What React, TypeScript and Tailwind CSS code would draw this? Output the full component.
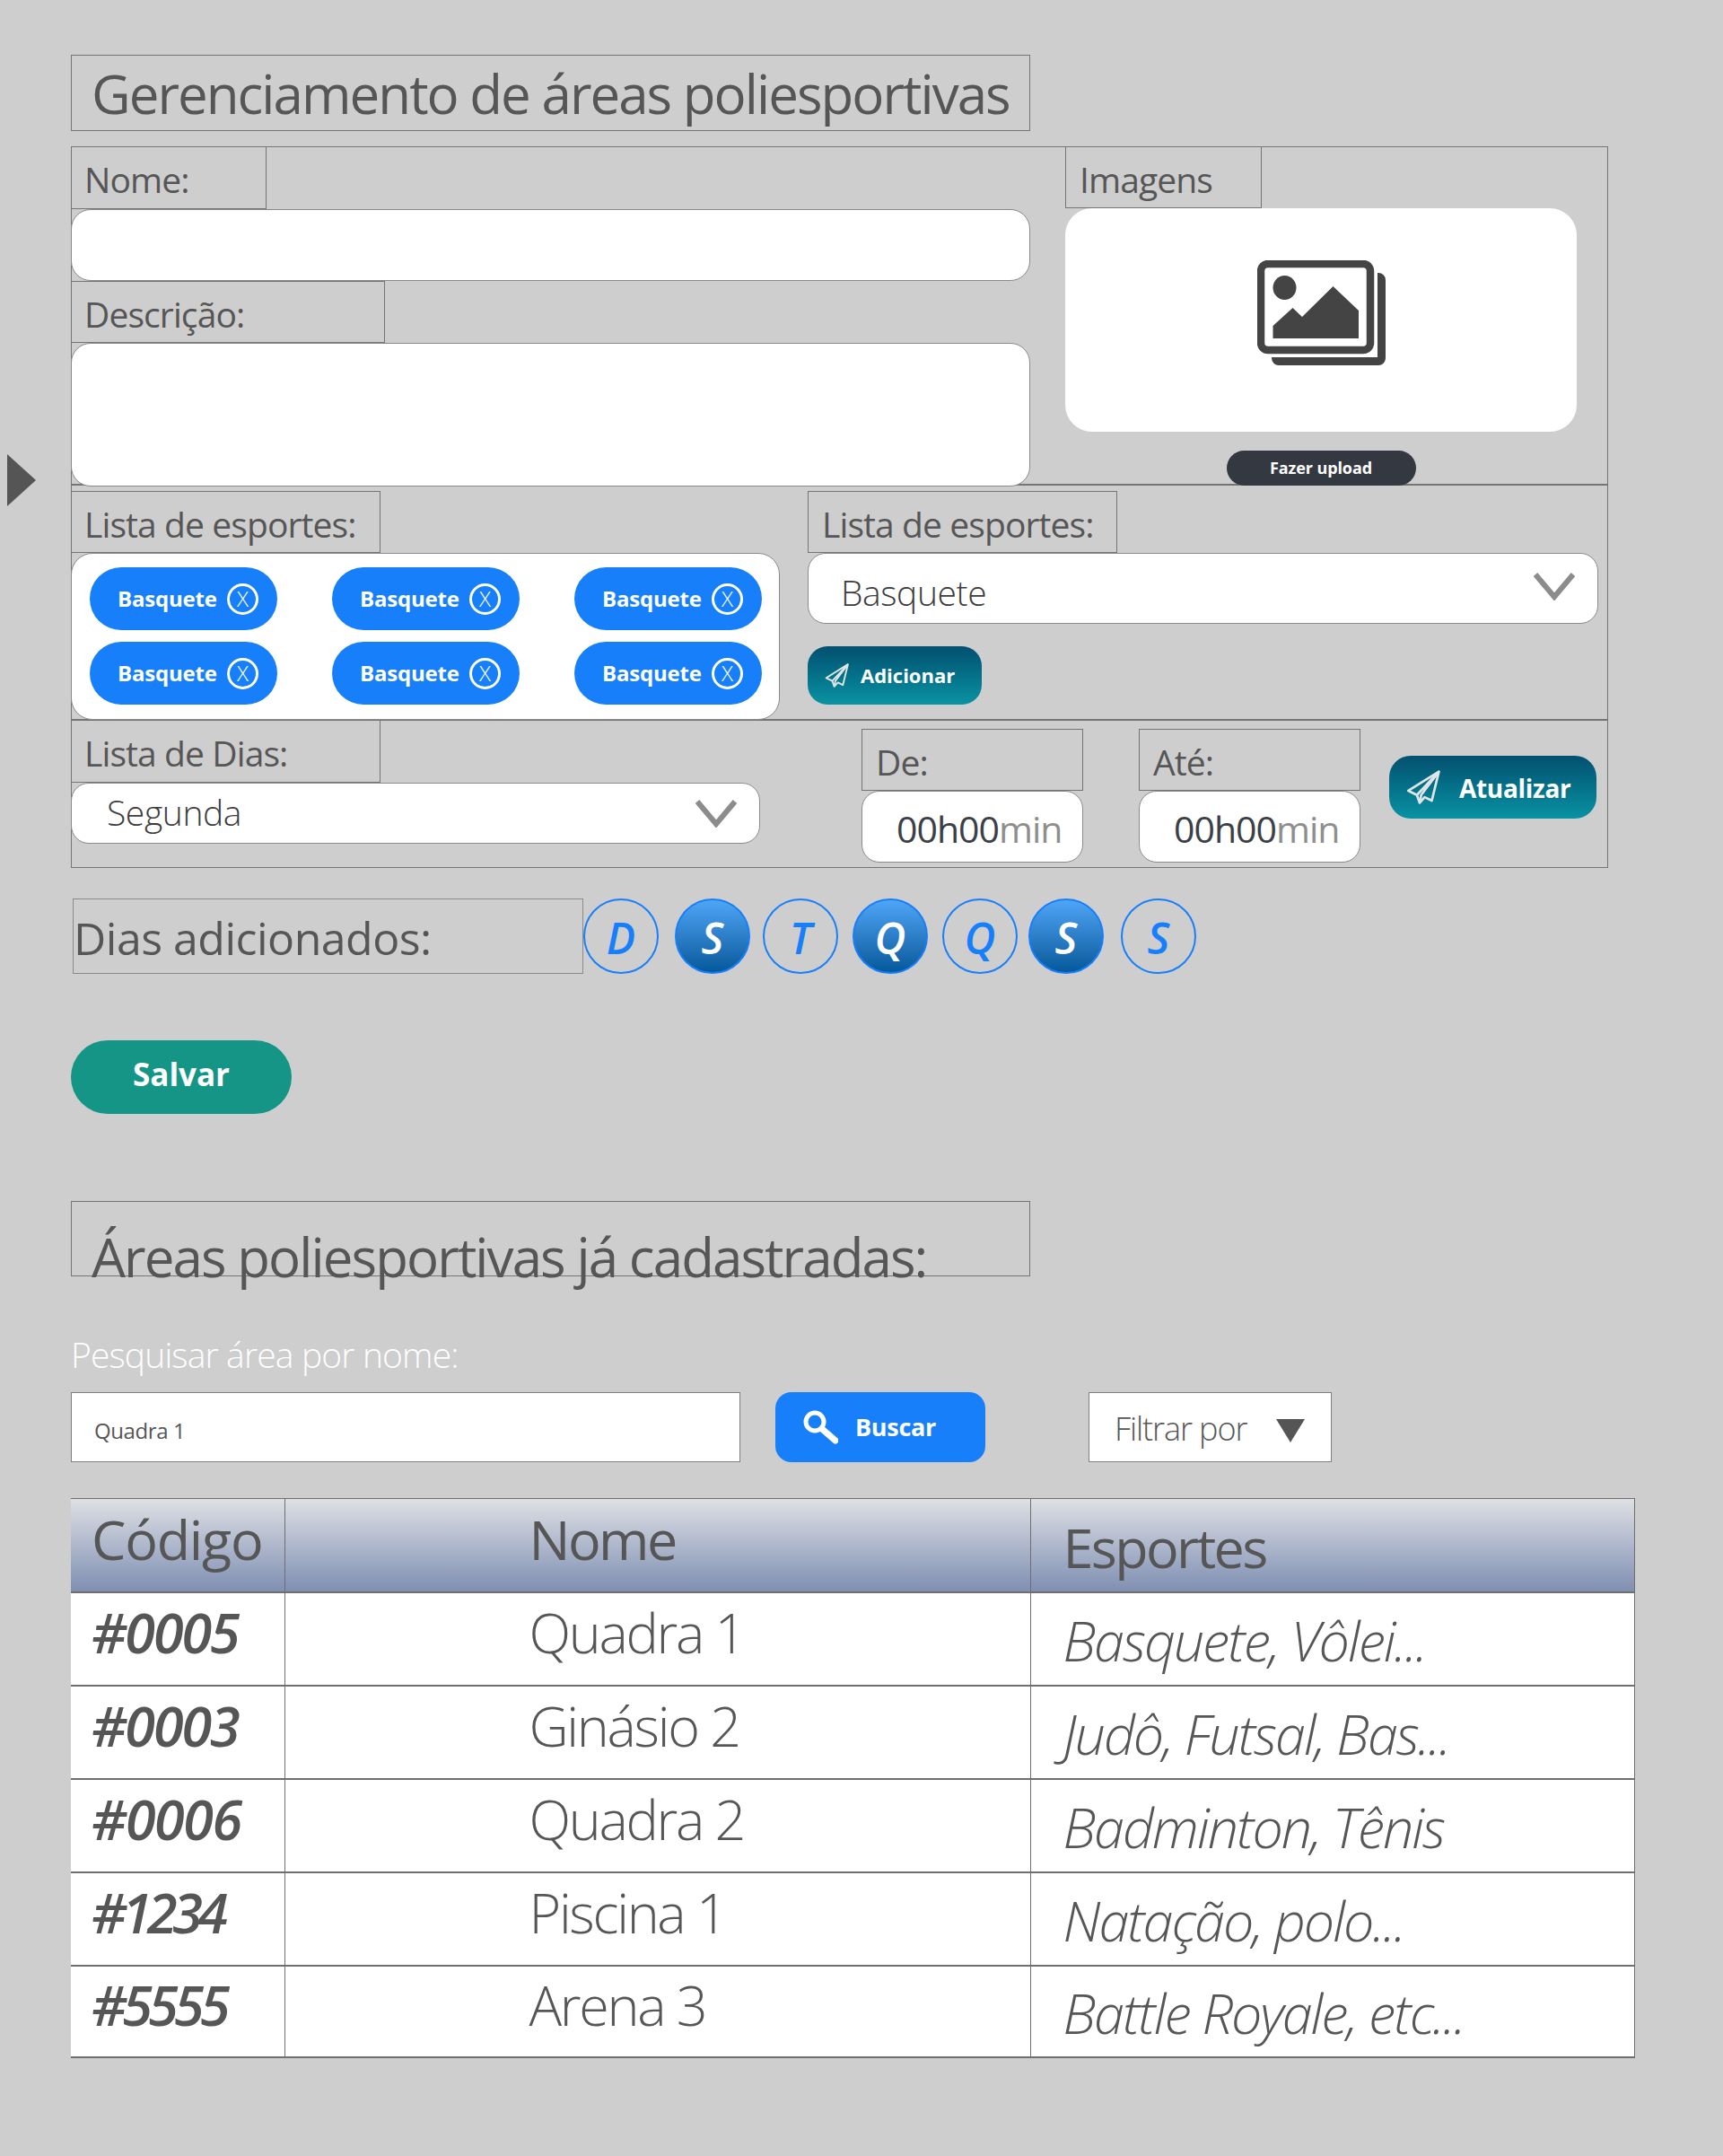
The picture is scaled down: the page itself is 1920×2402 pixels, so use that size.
const sans = "font-['Open_Sans','Noto_Sans',sans-serif]";

function Plane({ className }: { className: string }) {
  return (
    <svg viewBox="0 0 24 24" fill="none" stroke="#dfe6e8" strokeWidth="1.7" strokeLinejoin="round" className={className}>
      <path d="M23 1 1.5 14.5l6 3L9.5 23l3.5-4 5 2.5z" />
      <path d="M23 1 7.5 17.5M9.5 23l1-5.5L23 1" />
    </svg>
  );
}

function Chevron({ className }: { className: string }) {
  return (
    <svg viewBox="0 0 48 32" fill="none" stroke="#8c8c8c" strokeWidth="6" className={className}>
      <path d="M3 3 24 28 45 3" />
    </svg>
  );
}

function Label({ text, className }: { text: string; className: string }) {
  return (
    <div className={`box-border border border-[#757575] text-[#565656] text-[39px] font-medium leading-[71px] pl-[15px] tracking-[-0.9px] ${className}`}>
      {text}
    </div>
  );
}

function Chip() {
  return (
    <div className="flex items-center w-[209px] h-[70px] rounded-[35px] bg-[#187ffb] pl-[31px] text-white">
      <span className="text-[24px] font-bold tracking-[-0.2px] w-[122px]">Basquete</span>
      <span className="flex items-center justify-center w-[35px] h-[35px] rounded-full border-[3px] border-white text-[24px] font-light">X</span>
    </div>
  );
}

function Day({ letter, active, className }: { letter: string; active: boolean; className: string }) {
  return (
    <div
      className={
        active
          ? `flex items-center justify-center w-[84px] h-[84px] pt-[3px] rounded-full border-2 border-[#187ffb] bg-gradient-to-b from-[#4ea6f7] to-[#02599b] text-white text-[48px] font-semibold italic ${className}`
          : `flex items-center justify-center w-[84px] h-[84px] pt-[3px] rounded-full border-2 border-[#187ffb] text-[#187ffb] text-[48px] font-semibold italic ${className}`
      }
    >
      {letter}
    </div>
  );
}

function Time() {
  return (
    <div className="box-border w-[247px] h-[80px] rounded-[20px] border border-[#8a8a8a] bg-white pl-[38px] text-[41px] leading-[82px] font-medium tracking-[-1px] text-[#3b3f48]">
      00h00<span className="text-[#8e8e8e]">min</span>
    </div>
  );
}

const rows = [
  { code: "#0005", codeTrack: "tracking-[-2px]", name: "Quadra 1", sports: "Basquete, Vôlei...", height: "h-[104px]" },
  { code: "#0003", codeTrack: "tracking-[-2px]", name: "Ginásio 2", sports: "Judô, Futsal, Bas...", height: "h-[104px]" },
  { code: "#0006", codeTrack: "tracking-[-1.4px]", name: "Quadra 2", sports: "Badminton, Tênis", height: "h-[104px]" },
  { code: "#1234", codeTrack: "tracking-[-5.4px]", name: "Piscina 1", sports: "Natação, polo...", height: "h-[104px]" },
  { code: "#5555", codeTrack: "tracking-[-4.8px]", name: "Arena 3", sports: "Battle Royale, etc...", height: "h-[102px]" },
];

export default function App() {
  return (
    <div className={`relative box-border h-[2402px] w-[1920px] bg-[#cecece] pl-[79px] pt-[61px] ${sans}`}>
      <div className="absolute left-[8px] top-[506px] h-0 w-0 border-y-[29px] border-l-[32px] border-y-transparent border-l-[#555555]" />

      <h1 className="box-border w-[1069px] h-[85px] border border-[#757575] pl-[22px] text-[60px] font-medium leading-[84px] whitespace-nowrap text-[#565656] tracking-[-1.95px]">
        Gerenciamento de áreas poliesportivas
      </h1>

      <div className="box-border mt-[17px] w-[1713px] border border-[#757575]">
        <div className="flex h-[377px] border-b-2 border-[#757575]">
          <div className="-ml-px w-[1069px]">
            <Label text="Nome:" className="w-[218px] h-[69px] border-t-0 border-l-0" />
            <div className="h-[80px] rounded-[22px] border border-[#8a8a8a] bg-white" />
            <Label text="Descrição:" className="w-[350px] h-[69px] border-l-0" />
            <div className="h-[160px] rounded-[22px] border border-[#8a8a8a] bg-white" />
          </div>
          <div className="ml-[39px] w-[570px]">
            <Label text="Imagens" className="w-[219px] h-[68px] border-t-0" />
            <div className="flex h-[249px] items-center justify-center rounded-[30px] bg-white">
              <svg viewBox="0 0 143 117" className="h-[117px] w-[143px] -mt-[16px]" fill="#444444">
                <rect x="4" y="4" width="122" height="96" rx="8" fill="none" stroke="#444444" strokeWidth="8.5" />
                <path d="M134 14h1a8 8 0 0 1 8 8v87a8 8 0 0 1-8 8H24a8 8 0 0 1-8-8v-1h118z" />
                <ellipse cx="30.5" cy="30.5" rx="13" ry="13.5" />
                <path d="M17.5 87V73L39.5 53l10.5 10L84.5 29 113 56v31z" />
              </svg>
            </div>
            <div className="mx-auto mt-[21px] flex h-[39px] w-[211px] items-center justify-center rounded-[20px] bg-[#343841] text-[18px] font-bold tracking-[-0.1px] text-white">
              Fazer upload
            </div>
          </div>
        </div>

        <div className="flex h-[262px] border-b-2 border-[#757575] pt-[6px]">
          <div className="-ml-px w-[790px]">
            <Label text="Lista de esportes:" className="w-[345px] h-[69px] border-l-0" />
            <div className="grid h-[186px] grid-cols-[209px_209px_209px] content-start gap-x-[61px] gap-y-[13px] rounded-[24px] border border-[#8a8a8a] bg-white pl-[20px] pt-[15px]">
              {Array.from({ length: 6 }, (_, i) => (
                <Chip key={i} />
              ))}
            </div>
          </div>
          <div className="ml-[31px] w-[881px]">
            <Label text="Lista de esportes:" className="w-[345px] h-[69px]" />
            <div className="flex h-[79px] items-center justify-between rounded-[20px] border border-[#8a8a8a] bg-white pl-[36px] pr-[24px]">
              <span className="pt-[10px] text-[39px] font-light tracking-[-0.4px] text-[#3d3d3d]">Basquete</span>
              <Chevron className="h-[32px] w-[48px] -mt-[6px]" />
            </div>
            <div className="mt-[25px] flex h-[65px] w-[194px] items-center rounded-[22px] bg-gradient-to-b from-[#03506f] to-[#0a93a3] pl-[19px]">
              <Plane className="h-[27px] w-[27px]" />
              <span className="ml-[13px] text-[22px] font-bold text-white">Adicionar</span>
            </div>
          </div>
        </div>

        <div className="flex h-[163px]">
          <div className="-ml-px w-[768px]">
            <Label text="Lista de Dias:" className="w-[345px] h-[69px] border-t-0 border-l-0" />
            <div className="flex h-[68px] items-center justify-between rounded-[20px] border border-[#8a8a8a] bg-white pl-[39px] pr-[24px]">
              <span className="-mt-[2px] text-[39px] font-light tracking-[-0.4px] text-[#3d3d3d]">Segunda</span>
              <Chevron className="h-[32px] w-[48px]" />
            </div>
          </div>
          <div className="ml-[113px] pt-[9px]">
            <Label text="De:" className="w-[247px] h-[69px]" />
            <Time />
          </div>
          <div className="ml-[62px] pt-[9px]">
            <Label text="Até:" className="w-[247px] h-[69px]" />
            <Time />
          </div>
          <div className="ml-[32px] mt-[39px] flex h-[70px] w-[231px] items-center rounded-[24px] bg-gradient-to-b from-[#03506f] to-[#0a93a3] pl-[19px]">
            <Plane className="h-[38px] w-[38px]" />
            <span className="ml-[21px] pt-[2px] text-[28px] font-bold tracking-[-0.3px] text-white">Atualizar</span>
          </div>
        </div>
      </div>

      <div className="mt-[34px] flex h-[84px]">
        <div className="ml-[2px] box-border w-[569px] border border-[#8a8a8a] text-[50px] font-medium leading-[87px] tracking-[-0.5px] text-[#565656]">
          Dias adicionados:
        </div>
        <Day letter="D" active={false} className="" />
        <Day letter="S" active className="ml-[18px]" />
        <Day letter="T" active={false} className="ml-[14px]" />
        <Day letter="Q" active className="ml-[16px]" />
        <Day letter="Q" active={false} className="ml-[16px]" />
        <Day letter="S" active className="ml-[12px]" />
        <Day letter="S" active={false} className="ml-[19px]" />
      </div>

      <div className="mt-[74px] flex h-[82px] w-[246px] items-center justify-center rounded-[41px] bg-[#159586] pb-[6px] text-[35px] font-bold text-white">
        Salvar
      </div>

      <h2 className="mt-[97px] box-border w-[1069px] h-[84px] border border-[#757575] pl-[22px] text-[60px] font-medium leading-[122px] whitespace-nowrap text-[#565656] tracking-[-1.9px]">
        Áreas poliesportivas já cadastradas:
      </h2>

      <p className="mt-[60px] text-[39px] leading-[54px] font-light tracking-[-0.85px] text-white">Pesquisar área por nome:</p>

      <div className="mt-[15px] flex h-[78px]">
        <div className="box-border flex w-[746px] items-center border border-[#808080] bg-white pl-[25px] pt-[8px] text-[24px] tracking-[-0.4px] text-[#565656]">
          Quadra 1
        </div>
        <div className="ml-[39px] flex w-[234px] items-center rounded-[18px] bg-[#187ffb] pl-[30px]">
          <svg viewBox="0 0 40 40" fill="none" stroke="white" className="h-[40px] w-[40px]">
            <circle cx="14" cy="14" r="10" strokeWidth="5" />
            <path d="M22 22 37 35" strokeWidth="7" strokeLinecap="round" />
          </svg>
          <span className="ml-[19px] text-[27px] font-bold tracking-[-0.3px] text-white">Buscar</span>
        </div>
        <div className="ml-[115px] box-border flex w-[271px] items-center border border-[#808080] bg-white pl-[28px] pt-[3px] text-[36px] font-light tracking-[-1.1px] text-[#565656]">
          Filtrar por
          <span className="ml-[33px] mt-[4px] h-0 w-0 border-x-[16px] border-t-[26px] border-x-transparent border-t-[#555555]" />
        </div>
      </div>

      <table className="mt-[40px] w-[1742px] table-fixed border-collapse text-[61px] leading-[1.2] text-[#565656]">
        <colgroup>
          <col className="w-[238px]" />
          <col className="w-[831px]" />
          <col className="w-[673px]" />
        </colgroup>
        <thead>
          <tr className="h-[104px] bg-gradient-to-b from-[#dfe0e4] to-[#7f8fb2]">
            <th className="border-r border-t border-b-2 border-[#6f6f6f] pb-[14px] pl-[23px] text-left font-medium tracking-[-1.2px]">Código</th>
            <th className="border-r border-t border-b-2 border-[#6f6f6f] pb-[14px] pl-[272px] text-left font-medium tracking-[-2.5px]">Nome</th>
            <th className="border-r border-t border-b-2 border-[#6f6f6f] pt-[4px] pl-[36px] text-left font-medium tracking-[-2.6px]">Esportes</th>
          </tr>
        </thead>
        <tbody className="bg-white">
          {rows.map((r) => (
            <tr key={r.code} className={r.height}>
              <td className={`border-r border-b-2 border-[#6f6f6f] pb-[14px] pl-[23px] font-semibold italic ${r.codeTrack}`}>{r.code}</td>
              <td className="border-r border-b-2 border-[#6f6f6f] pb-[14px] pl-[272px] font-light tracking-[-2.3px]">{r.name}</td>
              <td className="border-r border-b-2 border-[#6f6f6f] pt-[4px] pl-[36px] font-light italic tracking-[-2px] whitespace-nowrap">{r.sports}</td>
            </tr>
          ))}
        </tbody>
      </table>
    </div>
  );
}
